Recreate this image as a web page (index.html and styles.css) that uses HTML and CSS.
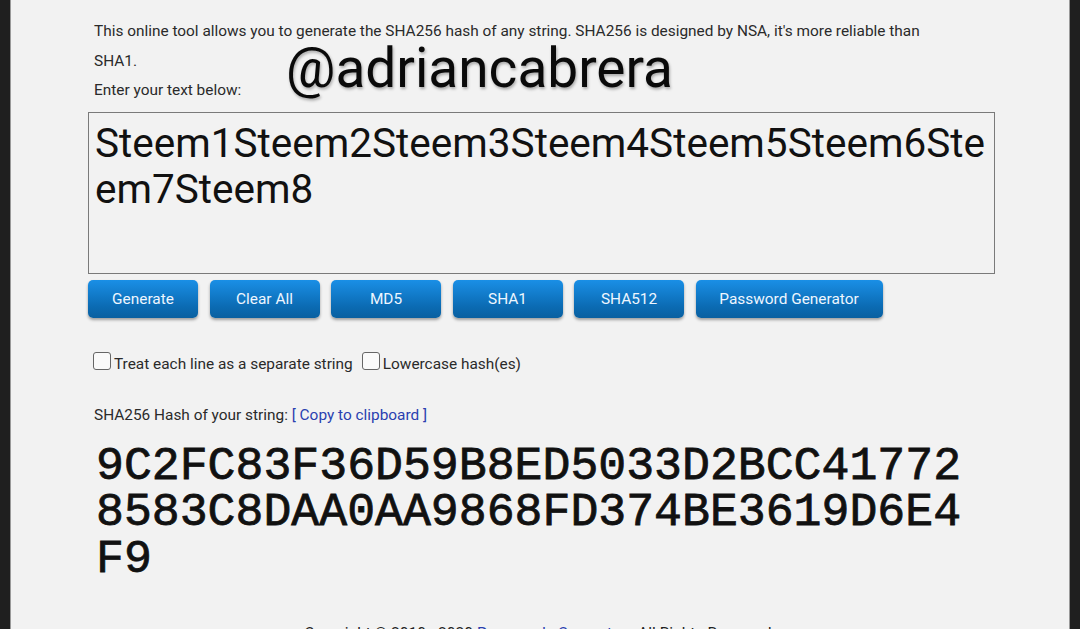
FILE: index.html
```html
<!DOCTYPE html>
<html>
<head>
<meta charset="utf-8">
<link rel="stylesheet" href="styles.css">
</head>
<body>
<div class="page">
  <div class="content">
    <p class="intro">This online tool allows you to generate the SHA256 hash of any string. SHA256 is designed by NSA, it's more reliable than SHA1.<br>Enter your text below:</p>
    <div class="watermark">@adriancabrera</div>
    <textarea class="input">Steem1Steem2Steem3Steem4Steem5Steem6Steem7Steem8</textarea>
    <div class="buttons">
      <button class="btn">Generate</button>
      <button class="btn">Clear All</button>
      <button class="btn">MD5</button>
      <button class="btn">SHA1</button>
      <button class="btn">SHA512</button>
      <button class="btn wide">Password Generator</button>
    </div>
    <div class="options">
      <label class="opt"><span class="box"></span>Treat each line as a separate string</label>
      <label class="opt"><span class="box"></span>Lowercase hash(es)</label>
    </div>
    <p class="result-label">SHA256 Hash of your string: <a class="copy">[ Copy to clipboard ]</a></p>
    <div class="hash">9C2FC83F36D59B8ED5033D2BCC417728583C8DAA0AA9868FD374BE3619D6E4F9</div>
  </div>
  <div class="footer">Copyright © 2010 - 2020 <a class="flink">Passwords Generator</a> . All Rights Reserved.</div>
</div>
</body>
</html>
```
FILE: styles.css
```css
html, body {
  margin: 0;
  padding: 0;
  background: #1f1f1f;
  height: 100%;
  overflow: hidden;
}
.page {
  margin: 0 10px 0 10px;
  background: #f2f2f2;
  border-left: 1px solid #9a9a9a;
  border-right: 1px solid #9a9a9a;
  min-height: 700px;
  font-family: Roboto, "Liberation Sans", sans-serif;
  color: #2a2a2a;
}
.content {
  margin-left: 77px;
  width: 907px;
  padding-top: 17px;
  position: relative;
}
.intro {
  margin: 0;
  padding: 0 6px;
  font-size: 15.4px;
  line-height: 29.5px;
  width: 850px;
}
.watermark {
  position: absolute;
  left: 198px;
  top: 37px;
  font-size: 55px;
  line-height: 62px;
  color: #0a0a0a;
  text-shadow: 1px 2px 3px rgba(0,0,0,0.3);
}
.input {
  display: block;
  margin-top: 6px;
  box-sizing: border-box;
  width: 907px;
  height: 162px;
  border: 1px solid #7a7a7a;
  background: #f2f2f2;
  font-family: Roboto, "Liberation Sans", sans-serif;
  font-size: 40.5px;
  line-height: 46px;
  color: #111;
  padding: 7px 0 7px 6px;
  resize: none;
  overflow: hidden;
  word-break: break-all;
}
.buttons {
  display: flex;
  gap: 11.5px;
  margin-top: 6px;
}
.btn {
  width: 110px;
  height: 38px;
  border: none;
  border-radius: 5px;
  background: linear-gradient(#1a8fe6, #0b6bb3 70%, #0a60a0);
  color: #eef6ff;
  font-family: Roboto, "Liberation Sans", sans-serif;
  font-size: 15.4px;
  box-shadow: 0 2px 3px rgba(0,0,0,0.35);
  padding: 0;
}
.btn.wide {
  width: 187px;
}
.options {
  display: flex;
  align-items: center;
  margin-top: 35px;
  padding-left: 5px;
  font-size: 15.4px;
  line-height: 22px;
}
.opt {
  display: flex;
  align-items: center;
  margin-right: 9px;
}
.box {
  display: inline-block;
  width: 16px;
  height: 16px;
  border: 1px solid #666;
  border-radius: 3px;
  background: #fafafa;
  margin-right: 3px;
  position: relative;
  top: -3px;
}
.result-label {
  margin: 29px 0 0 0;
  padding-left: 6px;
  font-size: 15.4px;
  line-height: 22px;
}
.copy {
  color: #2a3fb0;
}
.hash {
  margin-top: 18px;
  padding-left: 8px;
  width: 880px;
  font-family: "Liberation Mono", "Courier New", monospace;
  font-weight: normal;
  -webkit-text-stroke: 0.8px #111;
  font-size: 46.5px;
  line-height: 46.5px;
  color: #111;
  word-break: break-all;
}
.footer {
  margin-top: 40px;
  text-align: center;
  font-size: 15.6px;
  line-height: 22px;
  color: #222;
}
.flink {
  color: #2a3fb0;
}
```
